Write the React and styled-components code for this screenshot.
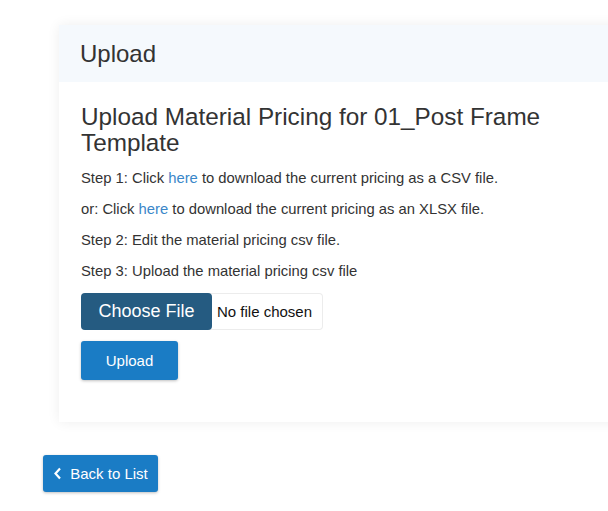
import React from 'react';
import styled, { createGlobalStyle } from 'styled-components';

const GlobalStyle = createGlobalStyle`
  html, body {
    margin: 0;
    padding: 0;
    background: #fff;
    overflow: hidden;
    font-family: "Liberation Sans", Arial, sans-serif;
    color: #333;
  }
`;

const Page = styled.div`
  width: 608px;
  min-height: 511px;
  padding: 25px 0 0 43px;
  box-sizing: border-box;
`;

const Card = styled.div`
  margin-left: 16px;
  width: 600px;
  background: #fff;
  box-shadow: 0 0 12px rgba(0, 0, 0, 0.07);
`;

const CardHeader = styled.div`
  height: 57px;
  display: flex;
  align-items: center;
  padding: 0 21px;
  background: #f5f9fd;
  font-size: 24px;
  color: #333;
`;

const CardBody = styled.div`
  padding: 22px 80px 42px 22px;
`;

const Title = styled.h2`
  margin: 0 0 12px;
  font-size: 24.3px;
  font-weight: 400;
  line-height: 26px;
  color: #333;
`;

const Step = styled.p`
  margin: 0 0 10px;
  font-size: 14.8px;
  line-height: 21px;
  color: #333;
`;

const Link = styled.a`
  color: #3a87c9;
  text-decoration: none;
`;

const FileField = styled.div`
  display: inline-flex;
  align-items: center;
  margin-top: 1px;
  height: 37px;
  border: 1px solid #ececec;
  border-left: none;
  border-radius: 4px;
  box-sizing: border-box;
`;

const ChooseButton = styled.span`
  display: flex;
  align-items: center;
  justify-content: center;
  width: 131px;
  height: 37px;
  background: #255b81;
  color: #fff;
  font-size: 18px;
  border-radius: 4px;
`;

const FileStatus = styled.span`
  padding: 0 10px 0 5px;
  font-size: 15px;
  color: #111;
`;

const Button = styled.button`
  display: flex;
  align-items: center;
  justify-content: center;
  gap: 8px;
  width: ${p => p.$width}px;
  height: ${p => p.$height}px;
  padding: 0;
  border: none;
  border-radius: 3px;
  background: #1a7cc5;
  color: #fff;
  font-family: "Liberation Sans", Arial, sans-serif;
  font-size: 15px;
  box-shadow: 0 1px 3px rgba(0, 0, 0, 0.25);
  cursor: pointer;
`;

const UploadRow = styled.div`
  margin-top: 11px;
`;

const Footer = styled.div`
  margin-top: 33px;
`;

const Chevron = () => (
  <svg width="9" height="13" viewBox="0 0 9 13">
    <path d="M7 1.5 L2.5 6.5 L7 11.5" fill="none" stroke="#fff" strokeWidth="2.2" />
  </svg>
);

const App = () => (
  <>
    <GlobalStyle />
    <Page>
      <Card>
        <CardHeader>Upload</CardHeader>
        <CardBody>
          <Title>Upload Material Pricing for 01_Post Frame Template</Title>
          <Step>Step 1: Click <Link href="#">here</Link> to download the current pricing as a CSV file.</Step>
          <Step>or: Click <Link href="#">here</Link> to download the current pricing as an XLSX file.</Step>
          <Step>Step 2: Edit the material pricing csv file.</Step>
          <Step>Step 3: Upload the material pricing csv file</Step>
          <FileField>
            <ChooseButton>Choose File</ChooseButton>
            <FileStatus>No file chosen</FileStatus>
          </FileField>
          <UploadRow>
            <Button $width={97} $height={39}>Upload</Button>
          </UploadRow>
        </CardBody>
      </Card>
      <Footer>
        <Button $width={115} $height={37}><Chevron />Back to List</Button>
      </Footer>
    </Page>
  </>
);

export default App;
